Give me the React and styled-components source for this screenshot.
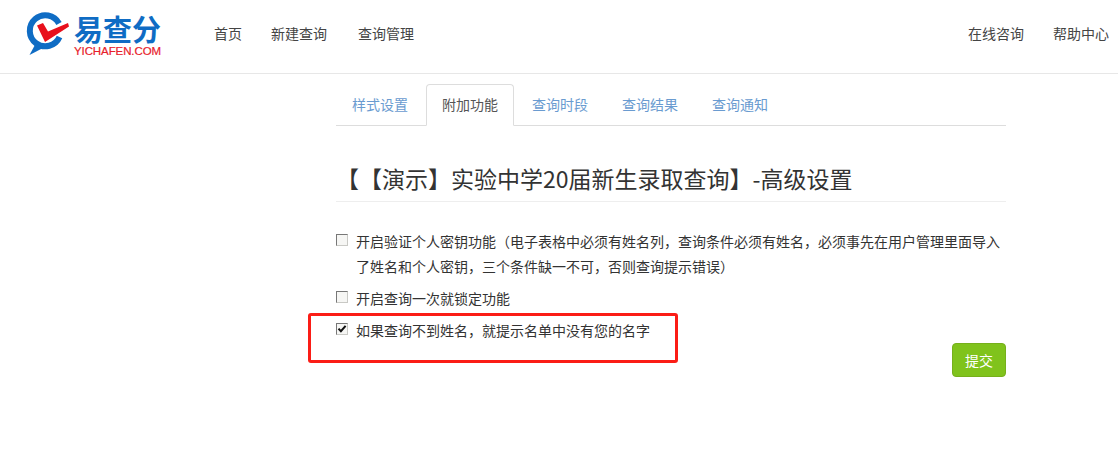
import React from "react";
import styled, { createGlobalStyle } from "styled-components";

const Global = createGlobalStyle`
  html, body { margin: 0; padding: 0; background: #fff; }
  body { font-family: "Noto Sans CJK SC", "Liberation Sans", sans-serif; font-size: 14px; color: #333; text-spacing-trim: space-all; }
  * { box-sizing: border-box; }
`;
const Page = styled.div`width: 1118px; height: 460px; overflow: hidden; position: relative;`;
const Header = styled.header`
  height: 74px; border-bottom: 1px solid #e7e7e7; display: flex; align-items: center; padding: 0 9px 0 24px;
`;
const Logo = styled.div`display: flex; align-items: flex-start; align-self: flex-start; width: 190px; margin-top: 8px;`;
const MarkSvg = styled.svg`flex: none; display: block;`;
const LogoWords = styled.div`display: flex; flex-direction: column; width: 90px; margin-top: 4px;`;
const LogoCn = styled.span`
  font-size: 29px; line-height: 33px; height: 33px; font-weight: 700; color: #0f6cc4; white-space: nowrap;
`;
const LogoEn = styled.span`
  font-family: "Liberation Sans", sans-serif; font-size: 11.5px; line-height: 12px; color: #e8202a; white-space: nowrap; letter-spacing: -.1px; -webkit-text-stroke: .2px #e8202a;
`;
const Nav = styled.nav`display: flex; gap: 29px; margin-top: -8px; flex: ${p => (p.$grow ? 1 : "none")};`;
const NavLink = styled.a`color: #444; font-size: 14px; line-height: 20px; white-space: nowrap; margin-left: ${p => p.$nudge || 0}px;`;
const Main = styled.main`width: 670px; margin-left: 336px; padding-top: 10px;`;
const Tabs = styled.ul`display: flex; list-style: none; margin: 0; padding: 0; height: 42px; border-bottom: 1px solid #ddd;`;
const Tab = styled.li`
  height: 42px; width: 88px; margin-right: 2px; text-align: center; line-height: 38px; font-size: 14px;
  border-radius: 4px 4px 0 0;
  color: ${p => (p.$active ? "#555" : "#6a9bd0")};
  border: 1px solid ${p => (p.$active ? "#ddd" : "transparent")};
  border-bottom-color: ${p => (p.$active ? "#fff" : "transparent")};
  background: ${p => (p.$active ? "#fff" : "transparent")};
`;
const Title = styled.h1`
  font-size: 23px; font-weight: 400; line-height: 34px; margin: 35px 0 0; padding-bottom: 6px; height: 41px; color: #333; border-bottom: 1px solid #eee; white-space: nowrap;
`;
const Options = styled.div`margin-top: 27px; display: flex; flex-direction: column;`;
const Option = styled.label`
  display: flex; align-items: flex-start; gap: 8px; margin-bottom: ${p => p.$gap}px; line-height: 25px; color: #333; font-size: 14px;
`;
const Box = styled.span`
  flex: none; width: 12px; height: 12px; margin-top: 5px; background: #f6f6f4;
  border: 1px solid; border-color: #777 #c9c9c5 #c9c9c5 #777; display: flex; align-items: center; justify-content: center;
`;
const Footer = styled.div`display: flex; justify-content: flex-end; margin-top: 0;`;
const Submit = styled.button`
  width: 54px; height: 34px; border: 1px solid #76b01b; border-radius: 4px; background: #80c31c; color: #fff; font: inherit; font-size: 14px; padding: 0;
`;
const Annotation = styled.div`
  position: absolute; left: 308px; top: 313px; width: 370px; height: 50px; border: 3px solid #fb1d16; border-radius: 3px; pointer-events: none;
`;

/* viewBox is page coordinates of the logo mark */
const Mark = () => (
  <MarkSvg width="50" height="50" viewBox="24 8 50 50">
    <path d="M59.5 37A15.5 15.5 0 1 1 59 23.5" fill="none" stroke="#0f6cc4" strokeWidth="6" />
    <path d="M36 43L29.5 55 43 48z" fill="#0f6cc4" />
    <path d="M37 25.5L43 23l5 8.5L68 23l1 3.5L45 42z" fill="#e8101c" />
  </MarkSvg>
);

const Check = () => (
  <svg width="10" height="10" viewBox="0 0 10 10"><path d="M1.5 4.6l2.4 2.6L8.6 1.8" fill="none" stroke="#111" strokeWidth="2" /></svg>
);

export default function App() {
  return (
    <Page>
      <Global />
      <Header>
        <Logo>
          <Mark />
          <LogoWords>
            <LogoCn>易查分</LogoCn>
            <LogoEn>YICHAFEN.COM</LogoEn>
          </LogoWords>
        </Logo>
        <Nav $grow>
          <NavLink>首页</NavLink>
          <NavLink>新建查询</NavLink>
          <NavLink $nudge={2}>查询管理</NavLink>
        </Nav>
        <Nav>
          <NavLink>在线咨询</NavLink>
          <NavLink>帮助中心</NavLink>
        </Nav>
      </Header>
      <Main>
        <Tabs>
          <Tab>样式设置</Tab>
          <Tab $active>附加功能</Tab>
          <Tab>查询时段</Tab>
          <Tab>查询结果</Tab>
          <Tab>查询通知</Tab>
        </Tabs>
        <Title>【【演示】实验中学20届新生录取查询】-高级设置</Title>
        <Options>
          <Option $gap={7}><Box /><span>开启验证个人密钥功能（电子表格中必须有姓名列，查询条件必须有姓名，必须事先在用户管理里面导入了姓名和个人密钥，三个条件缺一不可，否则查询提示错误）</span></Option>
          <Option $gap={7}><Box /><span>开启查询一次就锁定功能</span></Option>
          <Option $gap={0}><Box><Check /></Box><span>如果查询不到姓名，就提示名单中没有您的名字</span></Option>
        </Options>
        <Footer><Submit>提交</Submit></Footer>
      </Main>
      <Annotation />
    </Page>
  );
}
